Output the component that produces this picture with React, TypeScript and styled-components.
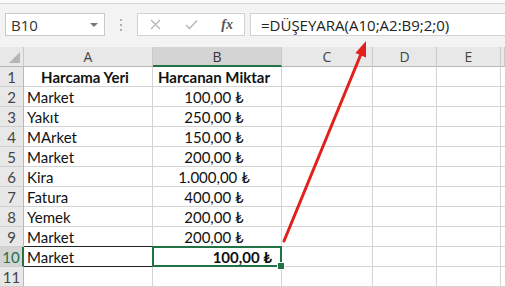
import { Fragment } from "react";
import styled, { createGlobalStyle, css } from "styled-components";

const Global = createGlobalStyle`
  html, body { margin: 0; padding: 0; background: #fff; overflow: hidden; }
  * { box-sizing: border-box; }
`;

const GREEN = "#217346";
const FONT = `Lato, "Noto Sans", "DejaVu Sans", sans-serif`;

const Frame = styled.div`
  position: relative;
  width: 505px;
  height: 287px;
  overflow: hidden;
  font-family: ${FONT};
`;

const TopStrip = styled.div`
  height: 4px;
  background: #fafafa;
  border-bottom: 1px solid #d6d6d6;
`;

const Toolbar = styled.div`
  height: 43px;
  background: #f3f3f3;
  display: flex;
  align-items: flex-start;
  padding: 9px 0 0 5px;
`;

const NameBox = styled.div`
  width: 100px;
  height: 23px;
  background: #fff;
  border: 1px solid #c8c8c8;
  display: flex;
  align-items: center;
  justify-content: space-between;
  padding: 0 6px 0 5px;
  font-family: "Open Sans", "Noto Sans", sans-serif;
  font-size: 15px;
  color: #333;
`;

const DropArrow = styled.span`
  width: 0;
  height: 0;
  border-left: 4px solid transparent;
  border-right: 4px solid transparent;
  border-top: 4px solid #777;
`;

const Grip = styled.div`
  width: 32px;
  height: 23px;
  display: flex;
  flex-direction: column;
  align-items: center;
  justify-content: center;
  gap: 3px;
  span {
    width: 2px;
    height: 2px;
    background: #b0b0b0;
  }
`;

const FuncBox = styled.div`
  width: 108px;
  height: 23px;
  background: #fff;
  border: 1px solid #d2d2d2;
  display: flex;
  align-items: center;
  justify-content: space-between;
  padding: 0 11px 0 12px;
  color: #b4b4b4;
`;

const Fx = styled.span`
  font-family: "Liberation Serif", serif;
  font-style: italic;
  font-weight: bold;
  font-size: 14px;
  color: #555;
`;

const FormulaBox = styled.div`
  flex: 1;
  height: 23px;
  margin-left: 5px;
  background: #fff;
  border: 1px solid #d2d2d2;
  border-right: none;
  display: flex;
  align-items: center;
  padding-left: 10px;
  font-family: "Open Sans", "Noto Sans", sans-serif;
  font-size: 15px;
  color: #222;
  white-space: nowrap;
`;

const Sheet = styled.div`
  display: grid;
  grid-template-columns: 24px 129px 129px 91px 64px 64px 4px;
  grid-auto-rows: 20px;
`;

const Corner = styled.div`
  background: #e8e8e8;
  border-right: 1px solid #c9c9c9;
  border-bottom: 1px solid #b8b8b8;
  display: flex;
  align-items: flex-end;
  justify-content: flex-end;
  padding: 0 3px 3px 0;
`;

const ColHead = styled.div<{ $active?: boolean }>`
  background: ${(p) => (p.$active ? "#d4d4d4" : "#e8e8e8")};
  border-right: 1px solid #c9c9c9;
  border-bottom: ${(p) => (p.$active ? `2px solid ${GREEN}` : "1px solid #b8b8b8")};
  display: flex;
  align-items: center;
  justify-content: center;
  font-family: "Open Sans", "Noto Sans", sans-serif;
  font-size: 14px;
  color: ${(p) => (p.$active ? "#333" : "#444")};
`;

const RowHead = styled.div<{ $active?: boolean }>`
  background: ${(p) => (p.$active ? "#d4d4d4" : "#e8e8e8")};
  border-right: ${(p) => (p.$active ? `2px solid ${GREEN}` : "1px solid #b8b8b8")};
  border-bottom: 1px solid #cfcfcf;
  display: flex;
  align-items: center;
  justify-content: center;
  font-size: 15px;
  color: ${(p) => (p.$active ? GREEN : "#444")};
`;

const Cell = styled.div<{
  $align?: "left" | "center" | "right";
  $bold?: boolean;
  $boxed?: boolean;
  $selected?: boolean;
}>`
  position: relative;
  border-right: 1px solid #d4d4d4;
  border-bottom: 1px solid #d4d4d4;
  display: flex;
  align-items: center;
  justify-content: ${(p) =>
    p.$align === "center" ? "center" : p.$align === "right" ? "flex-end" : "flex-start"};
  padding: 0 9px 0 3px;
  font-size: 15px;
  font-weight: ${(p) => (p.$bold ? 700 : 400)};
  color: #111;
  white-space: nowrap;
  ${(p) =>
    p.$boxed &&
    css`
      &::after {
        content: "";
        position: absolute;
        left: 0;
        right: -1px;
        top: -1px;
        bottom: -1px;
        border-top: 1px solid #222;
        border-bottom: 1px solid #222;
      }
    `}
  ${(p) =>
    p.$selected &&
    css`
      &::after {
        content: "";
        position: absolute;
        left: -1px;
        right: -1px;
        top: -1px;
        bottom: -1px;
        border: 2px solid ${GREEN};
      }
      &::before {
        content: "";
        position: absolute;
        right: -4px;
        bottom: -4px;
        width: 6px;
        height: 6px;
        background: ${GREEN};
        border: 1px solid #fff;
        z-index: 2;
      }
    `}
`;

const Overlay = styled.svg`
  position: absolute;
  left: 0;
  top: 0;
  pointer-events: none;
`;

const cols = ["A", "B", "C", "D", "E"];

const rows: [string, string][] = [
  ["Market", "100,00 ₺"],
  ["Yakıt", "250,00 ₺"],
  ["MArket", "150,00 ₺"],
  ["Market", "200,00 ₺"],
  ["Kira", "1.000,00 ₺"],
  ["Fatura", "400,00 ₺"],
  ["Yemek", "200,00 ₺"],
  ["Market", "200,00 ₺"],
];

const EmptyCells = ({ n }: { n: number }) => (
  <>
    {Array.from({ length: n }, (_, i) => (
      <Cell key={i} />
    ))}
  </>
);

export default function App() {
  return (
    <Frame>
      <Global />
      <TopStrip />
      <Toolbar>
        <NameBox>
          B10
          <DropArrow />
        </NameBox>
        <Grip>
          <span />
          <span />
          <span />
        </Grip>
        <FuncBox>
          <svg width="11" height="11" viewBox="0 0 11 11">
            <path d="M1 1L10 10M10 1L1 10" stroke="#b4b4b4" strokeWidth="1.3" />
          </svg>
          <svg width="13" height="11" viewBox="0 0 13 11">
            <path d="M1 6L4.5 9.5L12 1.5" stroke="#b4b4b4" strokeWidth="1.3" fill="none" />
          </svg>
          <Fx>fx</Fx>
        </FuncBox>
        <FormulaBox>=DÜŞEYARA(A10;A2:B9;2;0)</FormulaBox>
      </Toolbar>

      <Sheet>
        <Corner>
          <svg width="11" height="11" viewBox="0 0 11 11">
            <path d="M11 0L11 11L0 11Z" fill="#b5b5b5" />
          </svg>
        </Corner>
        {cols.map((c) => (
          <ColHead key={c} $active={c === "B"}>
            {c}
          </ColHead>
        ))}
        <ColHead />

        <RowHead>1</RowHead>
        <Cell $align="center" $bold>
          Harcama Yeri
        </Cell>
        <Cell $align="center" $bold>
          Harcanan Miktar
        </Cell>
        <EmptyCells n={4} />

        {rows.map(([place, amount], i) => (
          <Fragment key={i}>
            <RowHead>{i + 2}</RowHead>
            <Cell>{place}</Cell>
            <Cell $align="center">{amount}</Cell>
            <EmptyCells n={4} />
          </Fragment>
        ))}

        <RowHead $active>10</RowHead>
        <Cell $boxed>Market</Cell>
        <Cell $align="right" $bold $selected>
          100,00 ₺
        </Cell>
        <EmptyCells n={4} />

        <RowHead>11</RowHead>
        <EmptyCells n={6} />
      </Sheet>

      <Overlay width="505" height="287">
        <line x1="284" y1="241" x2="361" y2="54" stroke="#e3211c" strokeWidth="3" strokeLinecap="round" />
        <polygon points="366,41 366,57.5 355.5,53" fill="#e3211c" />
      </Overlay>
    </Frame>
  );
}
